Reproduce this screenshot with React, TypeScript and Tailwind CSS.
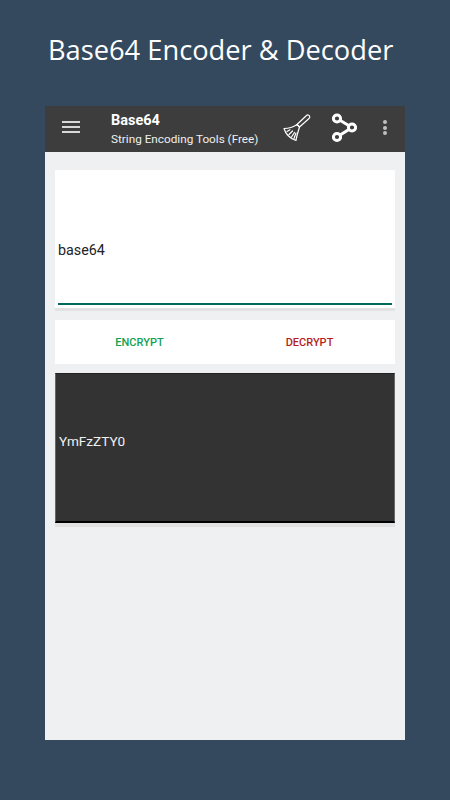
import React from "react";

function BroomIcon() {
  return (
    <svg width="30" height="30" viewBox="0 0 30 30" fill="none" stroke="white" strokeWidth="1.2" strokeLinejoin="round" strokeLinecap="round">
      {/* handle */}
      <path d="M24.5 2.5 C25.5 1.5 27 2 27.5 3 C28 4 27.6 5 27 5.5 L17.5 14 L15 11.5 Z" />
      {/* head */}
      <path d="M15 11.5 C11.5 14 7 15.5 2 15.5 C3.5 20.5 8 25.5 14 27.5 C14.5 23.5 16 19 17.5 14 Z" />
      <path d="M5 18.5 L8 16.8 M7 21.5 L10.5 18 M9.5 24 L12.5 19.5 M12 25.5 L14 20" />
    </svg>
  );
}

function ShareIcon() {
  return (
    <svg width="26" height="30" viewBox="0 0 26 30" fill="none" stroke="white" strokeWidth="3">
      <path d="M6 5.5 L21 14.5 L6 24" />
      <circle cx="6" cy="5.5" r="3.6" fill="#3d3d3d" />
      <circle cx="21" cy="14.5" r="3.6" fill="#3d3d3d" />
      <circle cx="6" cy="24" r="3.6" fill="#3d3d3d" />
    </svg>
  );
}

export default function App() {
  return (
    <div className="h-[800px] w-[450px] bg-[#34495e] flex flex-col overflow-hidden font-['Roboto',sans-serif]">
      <h1 className="mt-[31px] ml-[48px] h-[38px] text-[27.25px] leading-[38px] whitespace-nowrap text-white font-medium font-['Open_Sans',sans-serif]">
        Base64 Encoder &amp; Decoder
      </h1>

      <div className="mt-[37px] ml-[45px] w-[360px] h-[634px] bg-[#eff0f2] flex flex-col">
        {/* toolbar */}
        <div className="h-[46px] bg-[#3d3d3d] flex items-center shrink-0">
          <div className="ml-[17px] mb-[4px] w-[18px] flex flex-col gap-[3px]">
            <div className="h-[2px] bg-[#d8d8d8]" />
            <div className="h-[2px] bg-[#d8d8d8]" />
            <div className="h-[2px] bg-[#d8d8d8]" />
          </div>
          <div className="ml-[31px] text-white w-[170px]">
            <div className="text-[14.5px] leading-[20px] font-bold">Base64</div>
            <div className="text-[11.75px] leading-[16px] text-[#f0f0f0]">String Encoding Tools (Free)</div>
          </div>
          <div className="ml-[1px] mb-[3px]"><BroomIcon /></div>
          <div className="ml-[19px] mb-[3px]"><ShareIcon /></div>
          <div className="ml-[26px] mb-[3px] flex flex-col gap-[1.5px]">
            <div className="h-[4px] w-[4px] rounded-full bg-[#c0c0c0]" />
            <div className="h-[4px] w-[4px] rounded-full bg-[#c0c0c0]" />
            <div className="h-[4px] w-[4px] rounded-full bg-[#c0c0c0]" />
          </div>
        </div>

        <div className="pl-[9.5px] pr-[10px] pt-[18px] flex flex-col">
          {/* input card */}
          <div className="h-[141px] bg-white border-b-[3px] border-[#e2e2e2] flex flex-col justify-end pl-[3.5px] pr-[3px] pb-[3px]">
            <div className="text-[14.3px] leading-[20px] text-[#222] mb-[43px]">base64</div>
            <div className="h-[2px] bg-[#00695c]" />
          </div>

          {/* buttons */}
          <div className="mt-[9px] h-[44px] bg-white flex items-center pt-[2px]">
            <button className="w-[170px] text-[11px] font-medium text-[#12a150]">ENCRYPT</button>
            <button className="w-[170px] text-[11px] font-medium text-[#b71c1c]">DECRYPT</button>
          </div>

          {/* output card */}
          <div className="mt-[9px] h-[154px] border-b-[4px] border-[#e2e2e2]">
            <div className="h-[150px] bg-[#333333] border-l border-r border-[#666] border-t border-t-[#222] border-b-2 border-b-black flex items-center pl-[3.5px] pb-[12px] text-[13.6px] text-[#f0f0f0]">
              YmFzZTY0
            </div>
          </div>
        </div>
      </div>
    </div>
  );
}
